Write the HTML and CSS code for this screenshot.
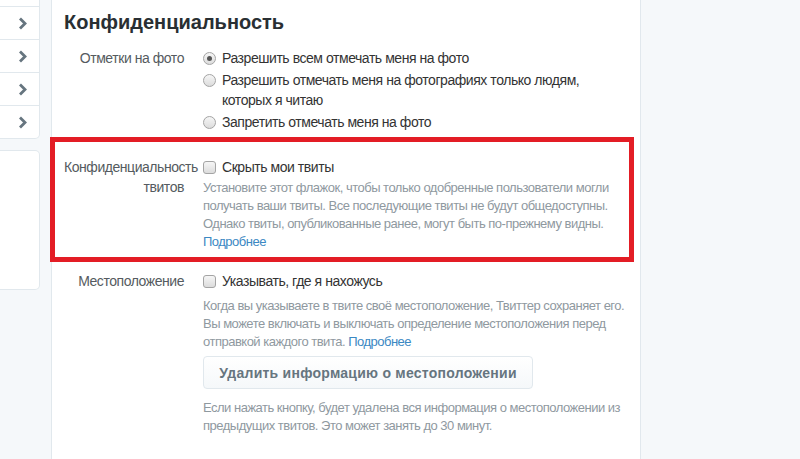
FILE: index.html
```html
<!DOCTYPE html>
<html lang="ru">
<head>
<meta charset="utf-8">
<title>Конфиденциальность</title>
<link rel="stylesheet" href="styles.css">
</head>
<body>
<div class="page">
  <aside class="sidebar">
    <div class="card card-nav">
      <div class="nav-row"><svg class="chev" width="9" height="13" viewBox="0 0 9 13"><path d="M2 1.5 L7 6.5 L2 11.5" /></svg></div>
      <div class="nav-row"><svg class="chev" width="9" height="13" viewBox="0 0 9 13"><path d="M2 1.5 L7 6.5 L2 11.5" /></svg></div>
      <div class="nav-row"><svg class="chev" width="9" height="13" viewBox="0 0 9 13"><path d="M2 1.5 L7 6.5 L2 11.5" /></svg></div>
      <div class="nav-row"><svg class="chev" width="9" height="13" viewBox="0 0 9 13"><path d="M2 1.5 L7 6.5 L2 11.5" /></svg></div>
      <div class="nav-row"><svg class="chev" width="9" height="13" viewBox="0 0 9 13"><path d="M2 1.5 L7 6.5 L2 11.5" /></svg></div>
    </div>
    <div class="card card-blank"></div>
  </aside>
  <main class="panel">
    <h1 class="title">Конфиденциальность</h1>

    <div class="row row-photo">
      <div class="label">Отметки на фото</div>
      <div class="controls">
        <label class="option"><span class="radio checked"></span><span class="opt-text">Разрешить всем отмечать меня на фото</span></label>
        <label class="option"><span class="radio"></span><span class="opt-text">Разрешить отмечать меня на фотографиях только людям, которых я читаю</span></label>
        <label class="option"><span class="radio"></span><span class="opt-text">Запретить отмечать меня на фото</span></label>
      </div>
    </div>

    <div class="row row-tweets">
      <div class="label">Конфиденциальность твитов</div>
      <div class="controls">
        <label class="option"><span class="checkbox"></span><span class="opt-text">Скрыть мои твиты</span></label>
        <p class="desc desc-tweets">Установите этот флажок, чтобы только одобренные пользователи могли получать ваши твиты. Все последующие твиты не будут общедоступны. Однако твиты, опубликованные ранее, могут быть по-прежнему видны. <a class="link" href="#">Подробнее</a></p>
      </div>
    </div>

    <div class="row row-geo">
      <div class="label">Местоположение</div>
      <div class="controls">
        <label class="option"><span class="checkbox"></span><span class="opt-text">Указывать, где я нахожусь</span></label>
        <p class="desc desc-geo">Когда вы указываете в твите своё местоположение, Твиттер сохраняет его. Вы можете включать и выключать определение местоположения перед отправкой каждого твита. <a class="link" href="#">Подробнее</a></p>
        <button class="btn" type="button">Удалить информацию о местоположении</button>
        <p class="desc desc-btn">Если нажать кнопку, будет удалена вся информация о местоположении из предыдущих твитов. Это может занять до 30 минут.</p>
      </div>
    </div>
  </main>
</div>
</body>
</html>
```

FILE: styles.css
```css
* { box-sizing: border-box; }
html, body { margin: 0; padding: 0; }
body {
  font-family: "Liberation Sans", Arial, sans-serif;
  background: #f5f8fa;
  width: 800px;
  height: 459px;
  overflow: hidden;
}
.page {
  display: flex;
  align-items: flex-start;
  height: 459px;
  overflow: hidden;
}
.sidebar {
  width: 40px;
  flex: none;
  display: flex;
  flex-direction: column;
  gap: 11px;
}
.card {
  background: #fff;
  border: 1px solid #e1e8ed;
  border-left: none;
  border-radius: 0 5px 5px 0;
}
.card-nav {
  margin-top: -28px;
}
.nav-row {
  height: 33px;
  border-top: 1px solid #e1e8ed;
  display: flex;
  align-items: center;
  justify-content: flex-end;
  padding-right: 12px;
}
.nav-row:first-child { border-top: none; }
.chev path {
  fill: none;
  stroke: #66757f;
  stroke-width: 2.8;
  stroke-linecap: butt;
  stroke-linejoin: miter;
}
.card-blank {
  height: 140px;
}
.panel {
  margin-left: 11px;
  width: 590px;
  flex: none;
  height: 459px;
  background: #fff;
  border-left: 1px solid #e1e8ed;
  border-right: 1px solid #e1e8ed;
  padding: 10px 6px 0 12px;
}
.title {
  margin: 0;
  font-size: 20px;
  line-height: 24px;
  font-weight: bold;
  color: #292f33;
}
.row {
  display: flex;
  gap: 19px;
  font-size: 14px;
  line-height: 20px;
  letter-spacing: -0.45px;
}
.label {
  width: 120px;
  flex: none;
  text-align: right;
  color: #555b60;
}
.controls {
  flex: 1;
  min-width: 0;
  padding-right: 6px;
}
.row-tweets .controls { padding-right: 1px; }
.option {
  display: flex;
  align-items: flex-start;
  gap: 6px;
  color: #333;
  margin-bottom: 2px;
}
.opt-text { flex: 1; }
.radio, .checkbox {
  flex: none;
  width: 13px;
  height: 13px;
  margin-top: 4px;
  border: 1px solid #a4a4a4;
  background: linear-gradient(#f6f6f6, #dcdcdc);
}
.radio {
  border-radius: 50%;
  position: relative;
}
.radio.checked::after {
  content: "";
  position: absolute;
  left: 3px;
  top: 3px;
  width: 5px;
  height: 5px;
  border-radius: 50%;
  background: #555;
}
.checkbox {
  border-radius: 3px;
}
.row-photo {
  margin-top: 14px;
}
.row-tweets {
  margin: 3px 0 0 -14px;
  border: 5px solid #e31d25;
  padding: 15px 0 6px 9px;
}
.desc {
  margin: 0;
  font-size: 13px;
  line-height: 18px;
  letter-spacing: -0.5px;
  color: #8f999f;
}
.desc-tweets { margin-top: 2px; }
.desc-geo { margin-top: 6px; }
.link {
  color: #3b88c3;
  text-decoration: none;
}
.row-geo {
  margin-top: 9px;
}
.btn {
  display: block;
  margin-top: 5px;
  width: 330px;
  height: 33px;
  padding: 0;
  border: 1px solid #e1e8ed;
  border-radius: 4px;
  background: linear-gradient(#ffffff, #f5f8fa);
  font-family: "Liberation Sans", Arial, sans-serif;
  font-size: 14px;
  font-weight: bold;
  letter-spacing: 0.25px;
  color: #66757f;
  text-align: center;
}
.desc-btn { margin-top: 10px; }
```
